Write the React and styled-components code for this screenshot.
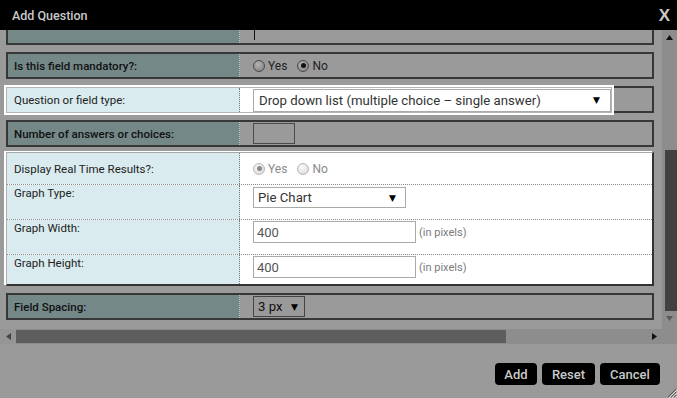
import React from 'react';
import styled, { createGlobalStyle, css } from 'styled-components';

const Global = createGlobalStyle`
  html, body { margin: 0; padding: 0; background: #9a9a9a; }
  body { font-family: Roboto, "Liberation Sans", sans-serif; }
`;

const Dialog = styled.div`
  width: 677px;
  height: 398px;
  display: flex;
  flex-direction: column;
  background: #9a9a9a;
  position: relative;
  overflow: hidden;
`;

const TitleBar = styled.div`
  height: 30px;
  flex: none;
  background: #000;
  display: flex;
  align-items: center;
  justify-content: space-between;
  padding: 0 7px 0 12px;
  box-sizing: border-box;
`;

const Title = styled.div`
  color: #c9c9c9;
  font: 500 12.5px Roboto, sans-serif;
`;

const Close = styled.div`
  color: #c9c9c9;
  font: 900 17px "Liberation Sans", sans-serif;
  line-height: 1;
`;

const Body = styled.div`
  flex: none;
  height: 314px;
  display: grid;
  grid-template-columns: 662px 15px;
  grid-template-rows: 299px 15px;
`;

const Viewport = styled.div`
  overflow: hidden;
  padding-left: 6px;
  display: flex;
  flex-direction: column;
`;

const Row = styled.div`
  box-sizing: border-box;
  flex: none;
  width: 648px;
  height: ${p => p.$h || 27}px;
  margin-top: ${p => p.$mt || 0}px;
  border: 2px solid #373737;
  ${p => p.$cut && css`border-top: none;`}
  background: #9a9a9a;
  display: flex;
`;

const DarkLabel = styled.div`
  box-sizing: border-box;
  width: 232px;
  flex: none;
  background: #748888;
  border-right: 1px dotted #c4c4c4;
  display: flex;
  align-items: center;
  padding-left: 6px;
  font: 500 11.5px Roboto, sans-serif;
  color: #111;
`;

const Value = styled.div`
  flex: 1;
  display: flex;
  align-items: ${p => p.$top ? 'flex-start' : 'center'};
  padding-left: 13px;
  padding-top: ${p => p.$pt || 0}px;
  gap: 4px;
  font: 400 12px Roboto, sans-serif;
  color: ${p => p.$muted ? '#8a8a8a' : '#222'};
`;

const TextareaStub = styled.div`
  align-self: flex-start;
  width: 0;
  height: 10px;
  border-left: 1px solid #111;
  margin-left: 1px;
`;

const Focus = styled.div`
  box-sizing: border-box;
  width: 606px;
  height: 26px;
  margin: -1px 0 0 -2px;
  border: 1px solid #b5b5b5;
  box-shadow: 0 0 0 2px #fff;
  background: #fff;
  display: flex;
`;

const LightLabel = styled.div`
  box-sizing: border-box;
  width: 233px;
  flex: none;
  background: #d9ebee;
  border-right: 1px dotted #777;
  display: flex;
  align-items: ${p => p.$top ? 'flex-start' : 'center'};
  padding-left: 7px;
  padding-top: ${p => p.$pt || 0}px;
  font: 400 11.5px Roboto, sans-serif;
  color: #222;
`;

const Panel = styled.div`
  box-sizing: border-box;
  flex: none;
  width: 648px;
  margin-top: 5px;
  border-top: 1px solid #a8a8a8;
  border-left: 1px solid #b0b0b0;
  border-right: 2px solid #333;
  border-bottom: 2px solid #333;
  box-shadow: -2px -1px 0 #fff;
  background: #fff;
  display: flex;
  flex-direction: column;
`;

const PanelRow = styled.div`
  box-sizing: border-box;
  display: flex;
  height: ${p => p.$h}px;
  border-bottom: ${p => p.$last ? 'none' : '1px dotted #888'};
`;

const RadioGroup = styled.label`
  display: flex;
  align-items: center;
  gap: 3px;
  margin-right: 6px;
  font: 400 12px Roboto, sans-serif;
  color: ${p => p.$muted ? '#8a8a8a' : '#222'};
`;

const Circle = styled.span`
  box-sizing: border-box;
  width: 12px;
  height: 12px;
  border-radius: 50%;
  display: flex;
  align-items: center;
  justify-content: center;
  border: 1px solid ${p => p.$light ? '#b8b8b8' : '#4a4a4a'};
  background: ${p => p.$light
    ? 'radial-gradient(circle at 40% 35%, #fafafa, #d6d6d6)'
    : 'radial-gradient(circle at 40% 35%, #b4b4b4, #7c7c7c)'};
  &::after {
    content: '';
    display: ${p => p.$on ? 'block' : 'none'};
    width: 5px;
    height: 5px;
    border-radius: 50%;
    background: ${p => p.$light ? '#8a8a8a' : '#111'};
  }
`;

const Radio = ({ label, on, light }) => (
  <RadioGroup $muted={light}>
    <Circle $on={on} $light={light} />
    {label}
  </RadioGroup>
);

const SelectBox = styled.div`
  box-sizing: border-box;
  width: ${p => p.$w}px;
  height: ${p => p.$h}px;
  border: 1px solid ${p => p.$dark ? '#454545' : '#aaa'};
  background: ${p => p.$dark ? 'transparent' : '#fff'};
  display: flex;
  align-items: center;
  justify-content: space-between;
  padding: 0 ${p => p.$pr || 10}px 0 ${p => p.$pl || 4}px;
  font: 400 13.2px Roboto, sans-serif;
  color: ${p => p.$dark ? '#111' : '#333'};
`;

const Arrow = styled.span`
  font: 400 9px "DejaVu Sans", sans-serif;
  color: #000;
`;

const TextInput = styled.div`
  box-sizing: border-box;
  width: ${p => p.$w}px;
  height: ${p => p.$h}px;
  border: 1px solid ${p => p.$dark ? '#4a4a4a' : '#aaa'};
  background: ${p => p.$dark ? 'transparent' : '#fff'};
  display: flex;
  align-items: center;
  padding-left: 3px;
  font: 400 13px Roboto, sans-serif;
  color: #555;
`;

const Hint = styled.span`
  align-self: center;
  font: 400 11px Roboto, sans-serif;
  color: #7a7a7a;
  margin-left: -1px;
`;

const FieldWithHint = styled.div`
  display: flex;
  align-items: center;
  gap: 4px;
`;

const VScroll = styled.div`
  background: #8d8d8d;
  display: flex;
  flex-direction: column;
  align-items: center;
`;

const VThumb = styled.div`
  align-self: flex-end;
  width: 12px;
  height: 161px;
  background: #414141;
  margin-top: 105px;
`;

const HScroll = styled.div`
  background: #8d8d8d;
  display: flex;
  align-items: center;
`;

const HArrowCell = styled.div`
  width: 16px;
  height: 100%;
  flex: none;
  display: flex;
  align-items: center;
  justify-content: center;
  background: ${p => p.$bg || 'transparent'};
`;

const HThumb = styled.div`
  width: 490px;
  height: 13px;
  background: #5e5e5e;
  flex: none;
`;

const HSpacer = styled.div`
  flex: 1;
`;

const Corner = styled.div`
  background: #8d8d8d;
`;

const Tri = ({ dir, color, size = 7 }) => {
  const pts = {
    up: `0,${size - 2} ${size / 2},0 ${size},${size - 2}`,
    down: `0,0 ${size / 2},${size - 2} ${size},0`,
    left: `${size - 2},0 0,${size / 2} ${size - 2},${size}`,
    right: `0,0 ${size - 2},${size / 2} 0,${size}`,
  }[dir];
  const vertical = dir === 'up' || dir === 'down';
  return (
    <svg width={vertical ? size : size - 2} height={vertical ? size - 2 : size}>
      <polygon points={pts} fill={color} />
    </svg>
  );
};

const ArrowSlot = styled.div`
  height: 15px;
  display: flex;
  align-items: center;
  justify-content: center;
`;

const Footer = styled.div`
  flex: 1;
  display: flex;
  justify-content: flex-end;
  align-items: flex-start;
  gap: 5px;
  padding: 19px 17px 0 0;
`;

const Button = styled.button`
  box-sizing: border-box;
  height: 22px;
  min-width: ${p => p.$w}px;
  background: #000;
  color: #c9c9c9;
  border: none;
  border-radius: 4px;
  font: 500 13px Roboto, sans-serif;
  padding: 0 8px;
`;

const Grip = styled.svg`
  position: absolute;
  right: 0;
  bottom: 0;
`;

export default function App() {
  return (
    <>
      <Global />
      <Dialog>
        <TitleBar>
          <Title>Add Question</Title>
          <Close>X</Close>
        </TitleBar>
        <Body>
          <Viewport>
            <Row $cut $h={15}>
              <DarkLabel />
              <Value $top>
                <TextareaStub />
              </Value>
            </Row>
            <Row $mt={7}>
              <DarkLabel>Is this field mandatory?:</DarkLabel>
              <Value>
                <Radio label="Yes" />
                <Radio label="No" on />
              </Value>
            </Row>
            <Row $mt={7}>
              <Focus>
                <LightLabel>Question or field type:</LightLabel>
                <Value>
                  <SelectBox $w={358} $h={23} $pl={5} $pr={10}>
                    <span>Drop down list (multiple choice – single answer)</span>
                    <Arrow>▼</Arrow>
                  </SelectBox>
                </Value>
              </Focus>
            </Row>
            <Row $mt={7}>
              <DarkLabel>Number of answers or choices:</DarkLabel>
              <Value>
                <TextInput $dark $w={42} $h={21} />
              </Value>
            </Row>
            <Panel>
              <PanelRow $h={32}>
                <LightLabel>Display Real Time Results?:</LightLabel>
                <Value>
                  <Radio label="Yes" on light />
                  <Radio label="No" light />
                </Value>
              </PanelRow>
              <PanelRow $h={35}>
                <LightLabel $top $pt={1}>Graph Type:</LightLabel>
                <Value $top $pt={2}>
                  <SelectBox $w={153} $h={21} $pl={4} $pr={9}>
                    <span>Pie Chart</span>
                    <Arrow>▼</Arrow>
                  </SelectBox>
                </Value>
              </PanelRow>
              <PanelRow $h={35}>
                <LightLabel $top $pt={1}>Graph Width:</LightLabel>
                <Value $top $pt={1}>
                  <FieldWithHint>
                    <TextInput $w={163} $h={22}>400</TextInput>
                    <Hint>(in pixels)</Hint>
                  </FieldWithHint>
                </Value>
              </PanelRow>
              <PanelRow $h={29} $last>
                <LightLabel $top $pt={1}>Graph Height:</LightLabel>
                <Value $top $pt={1}>
                  <FieldWithHint>
                    <TextInput $w={163} $h={22}>400</TextInput>
                    <Hint>(in pixels)</Hint>
                  </FieldWithHint>
                </Value>
              </PanelRow>
            </Panel>
            <Row $mt={7}>
              <DarkLabel>Field Spacing:</DarkLabel>
              <Value>
                <SelectBox $dark $w={52} $h={21} $pl={4} $pr={6}>
                  <span>3 px</span>
                  <Arrow>▼</Arrow>
                </SelectBox>
              </Value>
            </Row>
          </Viewport>
          <VScroll>
            <ArrowSlot><Tri dir="up" color="#111" /></ArrowSlot>
            <VThumb />
            <ArrowSlot><Tri dir="down" color="#5a5a5a" /></ArrowSlot>
          </VScroll>
          <HScroll>
            <HArrowCell $bg="#959595"><Tri dir="left" color="#444" /></HArrowCell>
            <HThumb />
            <HSpacer />
            <HArrowCell><Tri dir="right" color="#111" /></HArrowCell>
          </HScroll>
          <Corner />
        </Body>
        <Footer>
          <Button $w={42}>Add</Button>
          <Button $w={53}>Reset</Button>
          <Button $w={60}>Cancel</Button>
        </Footer>
        <Grip width="12" height="12" viewBox="0 0 12 12">
          <path d="M11 3 L3 11 M11 6 L6 11 M11 9 L9 11" stroke="#555" strokeWidth="1" />
          <path d="M12 4 L4 12 M12 7 L7 12 M12 10 L10 12" stroke="#ddd" strokeWidth="1" />
        </Grip>
      </Dialog>
    </>
  );
}
